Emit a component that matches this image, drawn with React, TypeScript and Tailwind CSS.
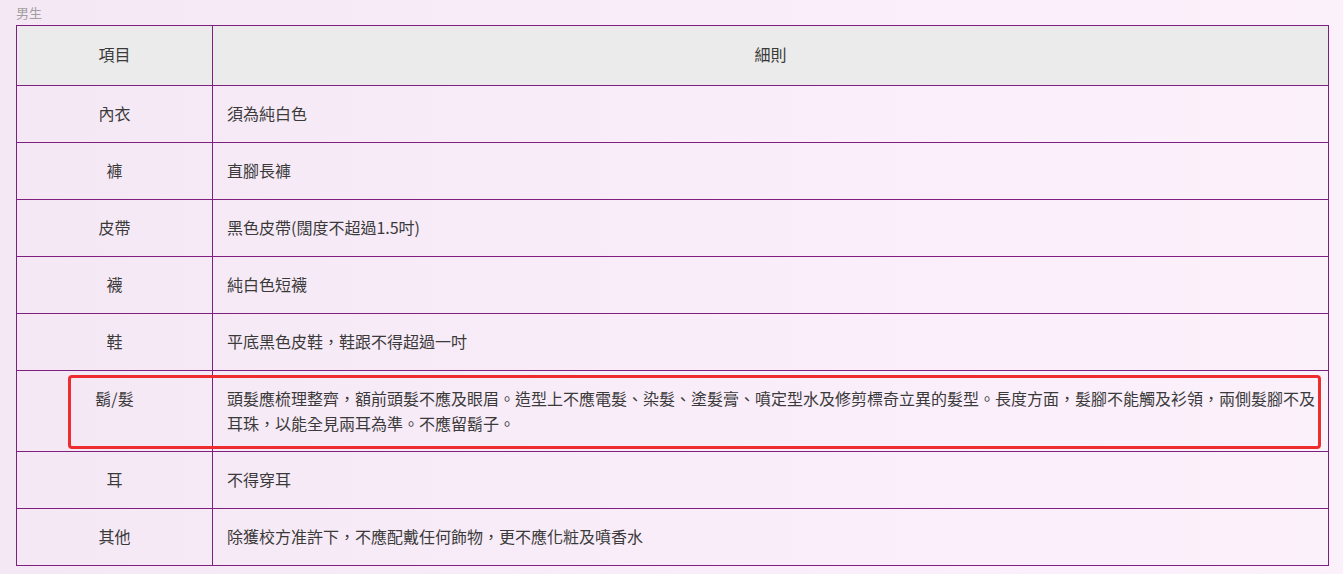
import React from 'react'

const rows: Array<{ item: string; detail: string; tall?: boolean }> = [
  { item: '內衣', detail: '須為純白色' },
  { item: '褲', detail: '直腳長褲' },
  { item: '皮帶', detail: '黑色皮帶(闊度不超過1.5吋)' },
  { item: '襪', detail: '純白色短襪' },
  { item: '鞋', detail: '平底黑色皮鞋，鞋跟不得超過一吋' },
  {
    item: '鬍/髮',
    detail:
      '頭髮應梳理整齊，額前頭髮不應及眼眉。造型上不應電髮、染髮、塗髮膏、噴定型水及修剪標奇立異的髮型。長度方面，髮腳不能觸及衫領，兩側髮腳不及耳珠，以能全見兩耳為準。不應留鬍子。',
    tall: true,
  },
  { item: '耳', detail: '不得穿耳' },
  { item: '其他', detail: '除獲校方准許下，不應配戴任何飾物，更不應化粧及噴香水' },
]

export default function App() {
  return (
    <div className="relative min-h-[574px] w-full bg-gradient-to-r from-[#f5e8f5] via-[#f9edf9] to-[#fbf1fb] pl-4 pr-[14px] font-['Noto_Sans_CJK_TC','Noto_Sans',sans-serif] text-[#3a3a3a]">
      {/* 標題 */}
      <div className="h-[25px] pt-[4px] text-[13px] leading-[18px] text-[#a0a0a0]">男生</div>

      <table className="w-full border-collapse border border-[#7f1f80] text-[16px]">
        <thead>
          <tr className="h-[60px] bg-[#ebebeb]">
            <th className="w-[196px] border border-[#7f1f80] pb-[3px] text-center text-[16px] font-normal">項目</th>
            <th className="border border-[#7f1f80] pb-[3px] text-center text-[16px] font-normal">細則</th>
          </tr>
        </thead>
        <tbody>
          {rows.map((row) => (
            <tr key={row.item}>
              <td
                className={
                  row.tall
                    ? 'border border-[#7f1f80] px-[15px] pb-[15px] pt-[15px] text-center align-top leading-[25px]'
                    : 'border border-[#7f1f80] px-[15px] pb-[16px] pt-[15px] text-center align-top leading-[25px]'
                }
              >
                {row.item}
              </td>
              <td
                className={
                  row.tall
                    ? 'border border-[#7f1f80] pb-[15px] pl-[14px] pr-[6px] pt-[15px] text-left align-top leading-[25px]'
                    : 'border border-[#7f1f80] pb-[16px] pl-[14px] pr-[6px] pt-[15px] text-left align-top leading-[25px]'
                }
              >
                {row.detail}
              </td>
            </tr>
          ))}
        </tbody>
      </table>

      {/* 紅框標示 */}
      <div className="pointer-events-none absolute left-[68px] top-[375px] h-[74px] w-[1253px] rounded-[4px] border-[3px] border-[#ee2e2e]" />
    </div>
  )
}
